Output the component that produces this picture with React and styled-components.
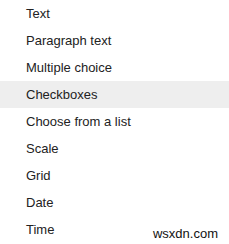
import React from 'react';
import styled, { createGlobalStyle } from 'styled-components';

const GlobalStyle = createGlobalStyle`
  html, body {
    margin: 0;
    padding: 0;
    background: #fff;
  }
  body {
    font-family: Arial, "Liberation Sans", sans-serif;
  }
`;

const Page = styled.div`
  position: relative;
  width: 229px;
  height: 244px;
  overflow: hidden;
  background: #fff;
`;

const Menu = styled.ul`
  list-style: none;
  margin: 0;
  padding: 0;
`;

const Item = styled.li`
  height: 27px;
  display: flex;
  align-items: center;
  padding-left: 26px;
  font-size: 13px;
  color: #222;
  background: ${props => (props.active ? '#eeeeee' : 'transparent')};
`;

const Watermark = styled.div`
  position: absolute;
  right: 11px;
  bottom: 3px;
  font-size: 13px;
  line-height: 15px;
  color: #111;
  font-family: Arial, "Liberation Sans", sans-serif;
`;

const items = [
  'Text',
  'Paragraph text',
  'Multiple choice',
  'Checkboxes',
  'Choose from a list',
  'Scale',
  'Grid',
  'Date',
  'Time',
];

const App = () => (
  <Page>
    <GlobalStyle />
    <Menu>
      {items.map(label => (
        <Item key={label} active={label === 'Checkboxes'}>{label}</Item>
      ))}
    </Menu>
    <Watermark>wsxdn.com</Watermark>
  </Page>
);

export default App;
